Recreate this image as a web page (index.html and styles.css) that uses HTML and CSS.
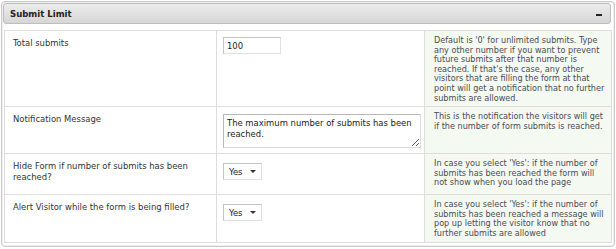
FILE: index.html
```html
<!DOCTYPE html>
<html>
<head>
    <title>Submit Limit</title>
    <link rel="stylesheet" href="styles.css">
</head>
<body>
<div class="panel">
    <div class="panel-head">
        <span class="panel-title">Submit Limit</span>
        <span class="toggle"></span>
    </div>
    <div class="settings">
        <div class="cell label">Total submits</div>
        <div class="cell field"><input type="text" class="num" value="100"></div>
        <div class="cell help">Default is '0' for unlimited submits. Type any other number if you want to prevent future submits after that number is reached. If that's the case, any other visitors that are filling the form at that point will get a notification that no further submits are allowed.</div>

        <div class="cell label">Notification Message</div>
        <div class="cell field"><textarea class="msg">The maximum number of submits has been reached.</textarea></div>
        <div class="cell help">This is the notification the visitors will get if the number of form submits is reached.</div>

        <div class="cell label">Hide Form if number of submits has been reached?</div>
        <div class="cell field"><span class="pick">Yes</span></div>
        <div class="cell help">In case you select 'Yes': if the number of submits has been reached the form will not show when you load the page</div>

        <div class="cell label">Alert Visitor while the form is being filled?</div>
        <div class="cell field"><span class="pick">Yes</span></div>
        <div class="cell help">In case you select 'Yes': if the number of submits has been reached a message will pop up letting the visitor know that no further submits are allowed</div>
    </div>
</div>
</body>
</html>
```

FILE: styles.css
```css
body {
    margin: 0;
    background-color: #fff;
    font-family: "DejaVu Sans Condensed", "DejaVu Sans", sans-serif;
    color: #333;
}
.panel {
    margin: 1px;
    padding: 1px 1px 3px 1px;
    border: 1px solid #c9c9c9;
    border-radius: 4px;
    box-shadow: inset 0 0 0 1px #f0f0f0;
}
.panel-head {
    display: flex;
    align-items: center;
    justify-content: space-between;
    height: 19px;
    margin-right: 2px;
    padding: 0 8px 0 6px;
    border: 1px solid #bdbdbd;
    border-radius: 3px;
    background: linear-gradient(#ececec, #d6d6d6);
}
.panel-title {
    font-size: 9.5px;
    font-weight: bold;
    color: #222;
}
.toggle {
    width: 6px;
    height: 2px;
    margin-top: 2px;
    background-color: #222;
}
.settings {
    display: grid;
    grid-template-columns: 212px 208px 1fr;
    grid-auto-rows: minmax(41px, auto);
    margin: 6px 1px 0 1px;
    border-top: 1px solid #ddd;
    border-left: 1px solid #ddd;
}
.cell {
    border-right: 1px solid #ddd;
    border-bottom: 1px solid #ddd;
}
.label {
    padding: 6px 6px 0 8px;
    font-size: 9.4px;
    line-height: 11px;
}
.field {
    padding: 6px 6px 5px 6px;
}
.help {
    padding: 5px 4px 3px 9px;
    font-size: 9px;
    line-height: 9.6px;
    color: #4a4a55;
    background-color: #f4faf1;
}
.num {
    display: block;
    box-sizing: border-box;
    width: 58px;
    height: 17px;
    padding: 0 3px;
    border: 1px solid #c4c4c4;
    border-bottom-color: #e0e0e0;
    border-right-color: #e0e0e0;
    font-family: inherit;
    font-size: 9.4px;
    color: #222;
}
.msg {
    display: block;
    box-sizing: border-box;
    width: 198px;
    height: 34px;
    margin-top: 1px;
    padding: 2px 3px;
    border: 1px solid #b8b8b8;
    border-bottom-color: #dcdcdc;
    border-right-color: #dcdcdc;
    font-family: inherit;
    font-size: 9.4px;
    line-height: 11px;
    color: #222;
    resize: both;
}
.pick {
    display: inline-flex;
    align-items: center;
    box-sizing: border-box;
    height: 17px;
    padding: 0 5px 0 5px;
    border: 1px solid #c4c4c4;
    border-bottom-color: #e0e0e0;
    border-right-color: #e0e0e0;
    font-size: 9.4px;
    color: #222;
    background-color: #fff;
}
.pick::after {
    content: "";
    margin-left: 7px;
    border-left: 3px solid transparent;
    border-right: 3px solid transparent;
    border-top: 3px solid #333;
}
```
